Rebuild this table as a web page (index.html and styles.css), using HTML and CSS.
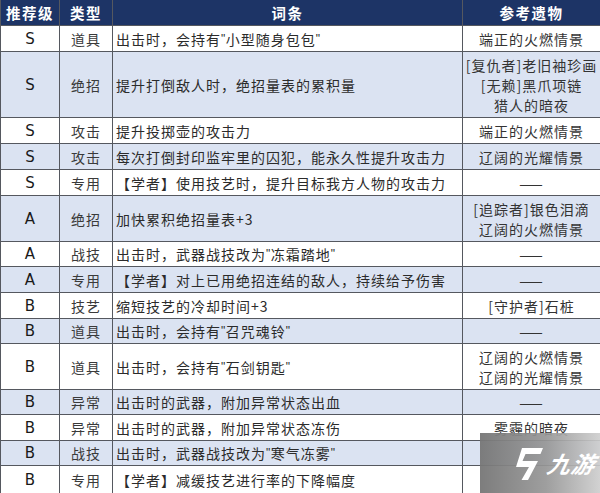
FILE: index.html
```html
<!DOCTYPE html>
<html lang="zh-CN">
<head>
<meta charset="utf-8">
<link rel="stylesheet" href="styles.css">
</head>
<body>
<div class="page">
  <div class="grid">
    <div class="c hd">推荐级</div><div class="c hd">类型</div><div class="c hd">词条</div><div class="c hd">参考遗物</div>

    <div class="c g">S</div><div class="c t">道具</div><div class="c d">出击时，会持有<span class="q">"</span>小型随身包包<span class="q">"</span></div><div class="c r">端正的火燃情景</div>

    <div class="c g b">S</div><div class="c t b">绝招</div><div class="c d b">提升打倒敌人时，绝招量表的累积量</div><div class="c r b">[复仇者]老旧袖珍画<br>[无赖]黑爪项链<br>猎人的暗夜</div>

    <div class="c g">S</div><div class="c t">攻击</div><div class="c d">提升投掷壶的攻击力</div><div class="c r">端正的火燃情景</div>

    <div class="c g b">S</div><div class="c t b">攻击</div><div class="c d b">每次打倒封印监牢里的囚犯，能永久性提升攻击力</div><div class="c r b">辽阔的光耀情景</div>

    <div class="c g">S</div><div class="c t">专用</div><div class="c d">【学者】使用技艺时，提升目标我方人物的攻击力</div><div class="c r">——</div>

    <div class="c g b">A</div><div class="c t b">绝招</div><div class="c d b">加快累积绝招量表+3</div><div class="c r b">[追踪者]银色泪滴<br>辽阔的火燃情景</div>

    <div class="c g">A</div><div class="c t">战技</div><div class="c d">出击时，武器战技改为<span class="q">"</span>冻霜踏地<span class="q">"</span></div><div class="c r">——</div>

    <div class="c g b">A</div><div class="c t b">专用</div><div class="c d b">【学者】对上已用绝招连结的敌人，持续给予伤害</div><div class="c r b">——</div>

    <div class="c g">B</div><div class="c t">技艺</div><div class="c d">缩短技艺的冷却时间+3</div><div class="c r">[守护者]石桩</div>

    <div class="c g b">B</div><div class="c t b">道具</div><div class="c d b">出击时，会持有<span class="q">"</span>召咒魂铃<span class="q">"</span></div><div class="c r b">——</div>

    <div class="c g">B</div><div class="c t">道具</div><div class="c d">出击时，会持有<span class="q">"</span>石剑钥匙<span class="q">"</span></div><div class="c r">辽阔的火燃情景<br>辽阔的光耀情景</div>

    <div class="c g b">B</div><div class="c t b">异常</div><div class="c d b">出击时的武器，附加异常状态出血</div><div class="c r b">——</div>

    <div class="c g">B</div><div class="c t">异常</div><div class="c d">出击时的武器，附加异常状态冻伤</div><div class="c r">雾霾的暗夜</div>

    <div class="c g b">B</div><div class="c t b">战技</div><div class="c d b">出击时，武器战技改为<span class="q">"</span>寒气冻雾<span class="q">"</span></div><div class="c r b"></div>

    <div class="c g">B</div><div class="c t">专用</div><div class="c d">【学者】减缓技艺进行率的下降幅度</div><div class="c r"></div>
  </div>

  <div class="logo">
    <svg class="logo-icon" viewBox="0 0 30 32" width="30" height="32">
      <path d="M9 0 H30 L27.5 6 H12.5 L9.5 13 H25 L15 32 H8.5 L16 19 H3 Z" fill="#fff"/>
    </svg>
    <span class="logo-text">九游</span>
  </div>
</div>
</body>
</html>
```

FILE: styles.css
```css
html, body {
  margin: 0;
  padding: 0;
  background: #fff;
}

.page {
  position: relative;
  width: 600px;
  height: 493px;
  overflow: hidden;
}

.grid {
  display: grid;
  grid-template-columns: 58px 52px 349px 137px;
  grid-template-rows: 25px 25px 65px 25px 25px 25px 45px 24px 25px 25px 24px 45px 24px 25px 24px 27px;
  column-gap: 1px;
  row-gap: 1px;
  padding-left: 1px;
  background: #55585f;
  font-family: "Noto Sans CJK SC", "Noto Sans", sans-serif;
  font-size: 14px;
  color: #2b2b2b;
}

.c {
  background: #fff;
  display: flex;
  align-items: center;
  justify-content: center;
  letter-spacing: 1px;
  line-height: 20px;
  text-align: center;
}

.c.b {
  background: #dbe3f2;
}

.hd {
  background: #1d3466;
  color: #fff;
  font-weight: bold;
  font-size: 14.5px;
  letter-spacing: 1.5px;
}

.g {
  font-family: "DejaVu Sans", sans-serif;
  font-size: 15px;
  letter-spacing: 0;
  color: #1a1a1a;
}

.t {
  color: #3a3a3a;
}

.d {
  justify-content: flex-start;
  text-align: left;
  padding-left: 3px;
  white-space: pre;
}

.q {
  font-family: "Liberation Sans", sans-serif;
  font-size: 12px;
  letter-spacing: 0.5px;
}

.r {
  color: #333;
}

.logo {
  position: absolute;
  left: 480px;
  top: 433px;
  width: 120px;
  height: 60px;
  background: linear-gradient(90deg, rgba(118,118,118,0.95) 0%, rgba(150,150,150,0.92) 55%, rgba(205,205,205,0.9) 100%);
  display: flex;
  align-items: center;
  gap: 5px;
  padding-left: 33px;
  box-sizing: border-box;
}

.logo-icon {
  display: block;
  margin-top: 2px;
}

.logo-text {
  color: #fff;
  font-family: "Noto Sans CJK SC", sans-serif;
  font-weight: bold;
  font-style: italic;
  font-size: 23px;
  letter-spacing: 1px;
  transform: skewX(-12deg);
}
```
